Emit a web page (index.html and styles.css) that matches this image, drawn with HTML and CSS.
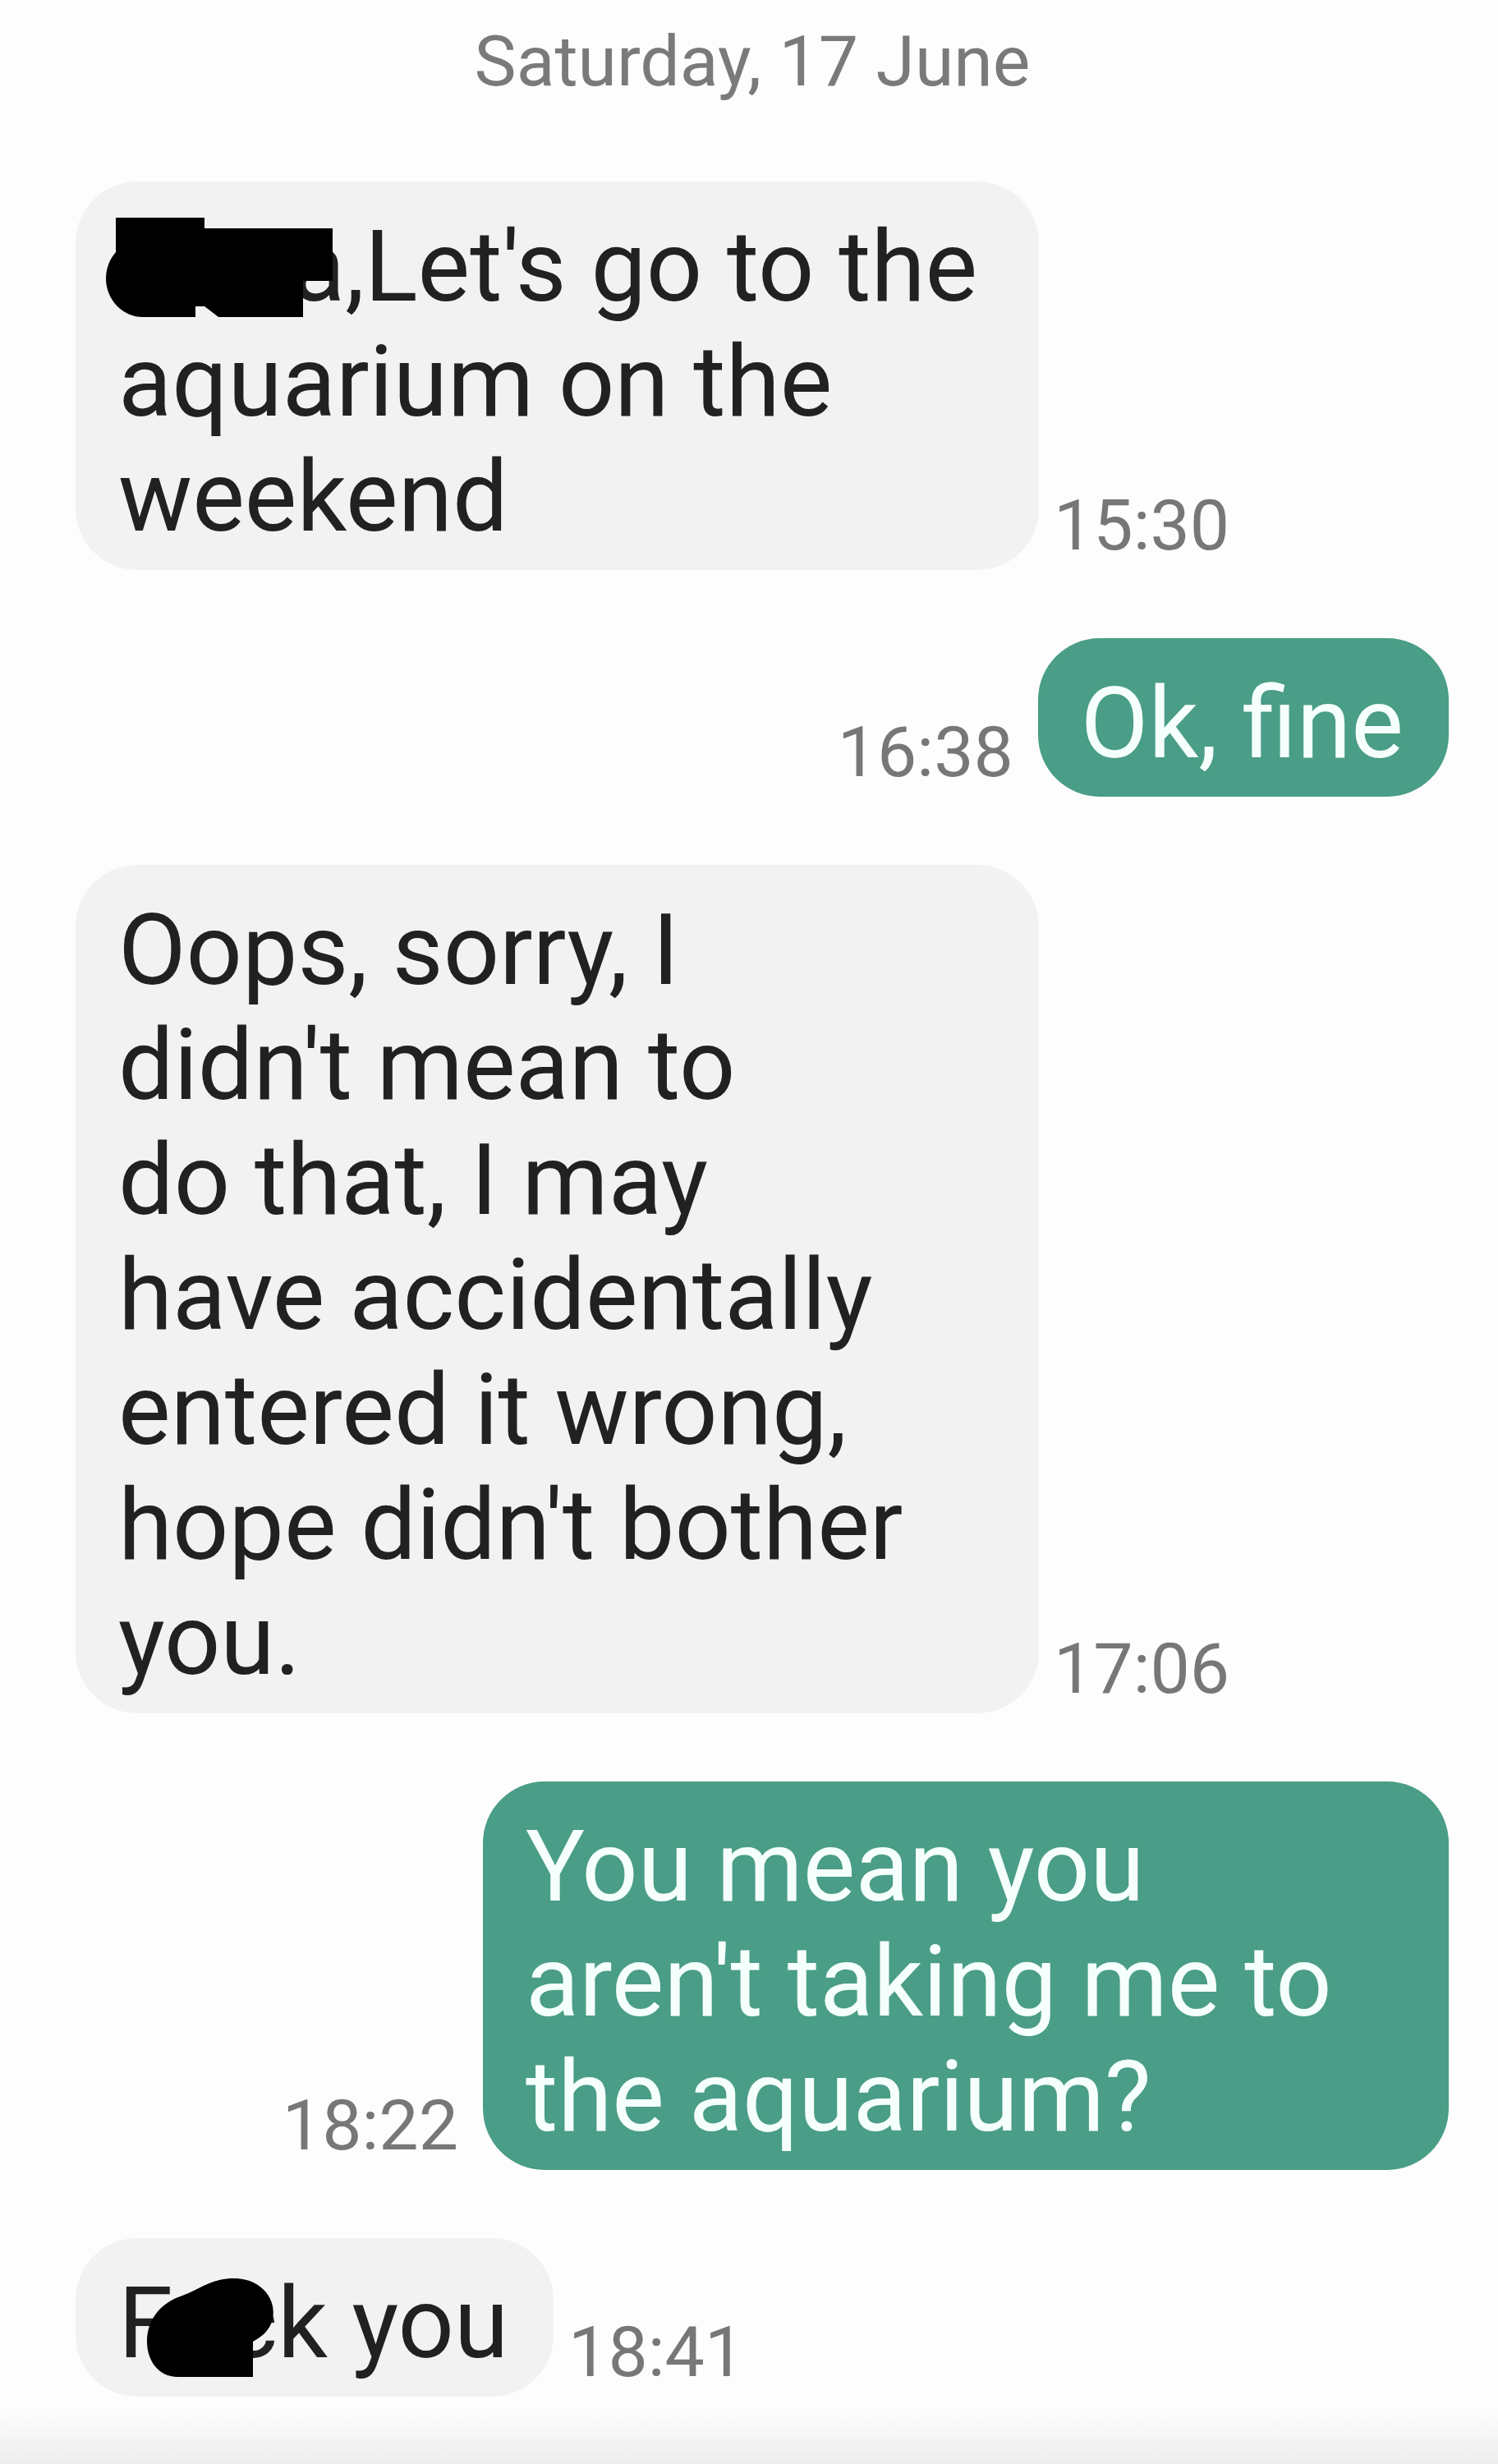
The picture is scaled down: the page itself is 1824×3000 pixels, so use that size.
FILE: index.html
```html
<!DOCTYPE html>
<html lang="en">
<head>
  <meta charset="UTF-8">
  <title>Messages</title>
  <link rel="stylesheet" href="styles.css">
</head>
<body>

  <div class="date">Saturday, 17 June</div>

  <div class="chat">

    <div class="row in">
      <div class="bubble full"><span class="redact-name"><svg class="mark-name" width="276" height="121" viewBox="0 0 276 121">
          <rect x="12" y="0" width="108" height="70"/>
          <rect x="120" y="13" width="156" height="64"/>
          <path d="M45 27 H240 V121 H45 A45 47 0 0 1 45 27 Z"/>
          <polygon points="109,108 120,108 137,121 109,121" fill="#f2f2f2"/>
        </svg></span>a,Let's go to the<br>aquarium on the<br>weekend</div>
      <span class="time">15:30</span>
    </div>

    <div class="row out">
      <span class="time">16:38</span>
      <div class="bubble">Ok, fine</div>
    </div>

    <div class="row in">
      <div class="bubble full">Oops, sorry, I<br>didn't mean to<br>do that, I may<br>have accidentally<br>entered it wrong,<br>hope didn't bother<br>you.</div>
      <span class="time">17:06</span>
    </div>

    <div class="row out">
      <span class="time">18:22</span>
      <div class="bubble full">You mean you<br>aren't taking me to<br>the aquarium?</div>
    </div>

    <div class="row in">
      <div class="bubble"><span class="redact-word">Fuc<svg class="mark-word" width="160" height="121" viewBox="0 0 160 121">
          <path d="M108 1 C140 1 160 25 155 50 C152 65 141 72 131 78 L131 121 L40 121 C15 121 2 100 2 78 C2 50 20 30 45 22 C65 15 80 1 108 1 Z"/>
        </svg></span>k you</div>
      <span class="time">18:41</span>
    </div>

  </div>

</body>
</html>
```

FILE: styles.css
```css
* {
  box-sizing: border-box;
}

body {
  margin: 0;
  min-height: 3000px;
  font-family: Roboto, "Noto Sans", sans-serif;
  color: #212121;
  background: linear-gradient(to bottom, #fdfdfd 2935px, #ededed 3000px);
}

.date {
  text-align: center;
  font-size: 86px;
  line-height: 100px;
  color: #7a7a7a;
  padding-top: 25px;
  padding-left: 8px;
  margin-bottom: 96px;
}

.chat {
  display: flex;
  flex-direction: column;
  gap: 83px;
  padding: 0 60px 0 92px;
}

.row {
  display: flex;
  align-items: flex-end;
}

.row.out {
  justify-content: flex-end;
}

.bubble {
  font-size: 120px;
  line-height: 140px;
  padding: 34px 55px 19px 52px;
  border-radius: 75px;
  background: #f2f2f2;
  color: #212121;
}

.row.out .bubble {
  background: #4a9d86;
  color: #f5fffc;
}

.bubble.full {
  width: 1173px;
}

.row.out .bubble.full {
  width: 1176px;
}

.time {
  font-size: 86px;
  line-height: 100px;
  color: #777777;
  margin-bottom: 4px;
}

.row.in .time {
  margin-left: 18px;
}

.row.out .time {
  margin-right: 30px;
}

/* black marker blots over the hidden words */
.redact-name {
  display: inline-block;
  position: relative;
  width: 211px;
}

.mark-name {
  position: absolute;
  left: -15px;
  top: -101px;
}

.redact-word {
  position: relative;
}

.mark-word {
  position: absolute;
  left: 33px;
  top: 14px;
}
```
